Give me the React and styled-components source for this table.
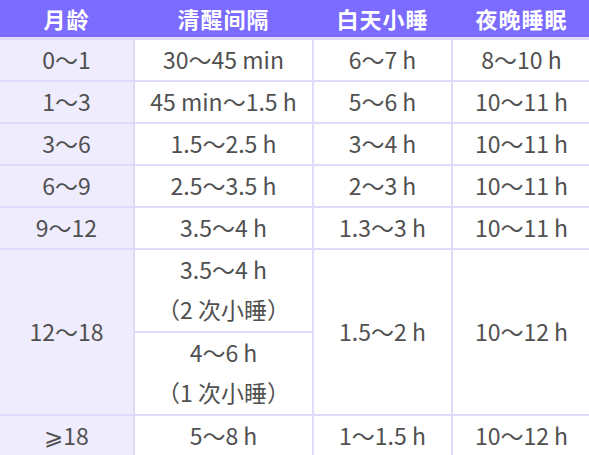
import styled, { createGlobalStyle } from 'styled-components'

const GlobalStyle = createGlobalStyle`
    body {
        margin:0;
        background:#ffffff;
        font-family:"Noto Sans CJK SC", "Noto Sans", sans-serif;
    }
`

const COLS = "133px 177px 137px 137px"

const Table = styled.div`
    width:590px;
    background-color:#dfdbfb;
`

const HeaderRow = styled.div`
    display:grid;
    grid-template-columns:${COLS};
    column-gap:2px;
    height:37px;
    background-color:#7c6bff;
    margin-bottom:3px;
`

const HeaderCell = styled.div`
    display:flex;
    align-items:center;
    justify-content:center;
    padding-bottom:2px;
    color:#ffffff;
    font-weight:700;
    font-size:22px;
    letter-spacing:1px;
`

const Body = styled.div`
    display:grid;
    grid-template-columns:${COLS};
    grid-template-rows:repeat(5, 40px) 81px 81px 40px;
    gap:2px;
`

const Cell = styled.div`
    display:flex;
    flex-direction:column;
    align-items:center;
    justify-content:center;
    padding-bottom:3px;
    background-color:${props => props.$first ? "#efecfe" : "#ffffff"};
    color:#505050;
    font-size:23px;
    line-height:40px;
    grid-row:${props => props.$rows ? `span ${props.$rows}` : "auto"};
`

const rows = [
    ["0～1", "30～45 min", "6～7 h", "8～10 h"],
    ["1～3", "45 min～1.5 h", "5～6 h", "10～11 h"],
    ["3～6", "1.5～2.5 h", "3～4 h", "10～11 h"],
    ["6～9", "2.5～3.5 h", "2～3 h", "10～11 h"],
    ["9～12", "3.5～4 h", "1.3～3 h", "10～11 h"],
]

function App(){
    return(
        <>
            <GlobalStyle />
            <Table>
                <HeaderRow>
                    <HeaderCell>月龄</HeaderCell>
                    <HeaderCell>清醒间隔</HeaderCell>
                    <HeaderCell>白天小睡</HeaderCell>
                    <HeaderCell>夜晚睡眠</HeaderCell>
                </HeaderRow>
                <Body>
                    {rows.map((row, index) => row.map((text, col) => <Cell key={`${index}-${col}`} $first={col === 0}>{text}</Cell>))}
                    <Cell $first $rows={2}>12～18</Cell>
                    <Cell>
                        <span>3.5～4 h</span>
                        <span>（2 次小睡）</span>
                    </Cell>
                    <Cell $rows={2}>1.5～2 h</Cell>
                    <Cell $rows={2}>10～12 h</Cell>
                    <Cell>
                        <span>4～6 h</span>
                        <span>（1 次小睡）</span>
                    </Cell>
                    <Cell $first>⩾18</Cell>
                    <Cell>5～8 h</Cell>
                    <Cell>1～1.5 h</Cell>
                    <Cell>10～12 h</Cell>
                </Body>
            </Table>
        </>
    )
}

export default App
